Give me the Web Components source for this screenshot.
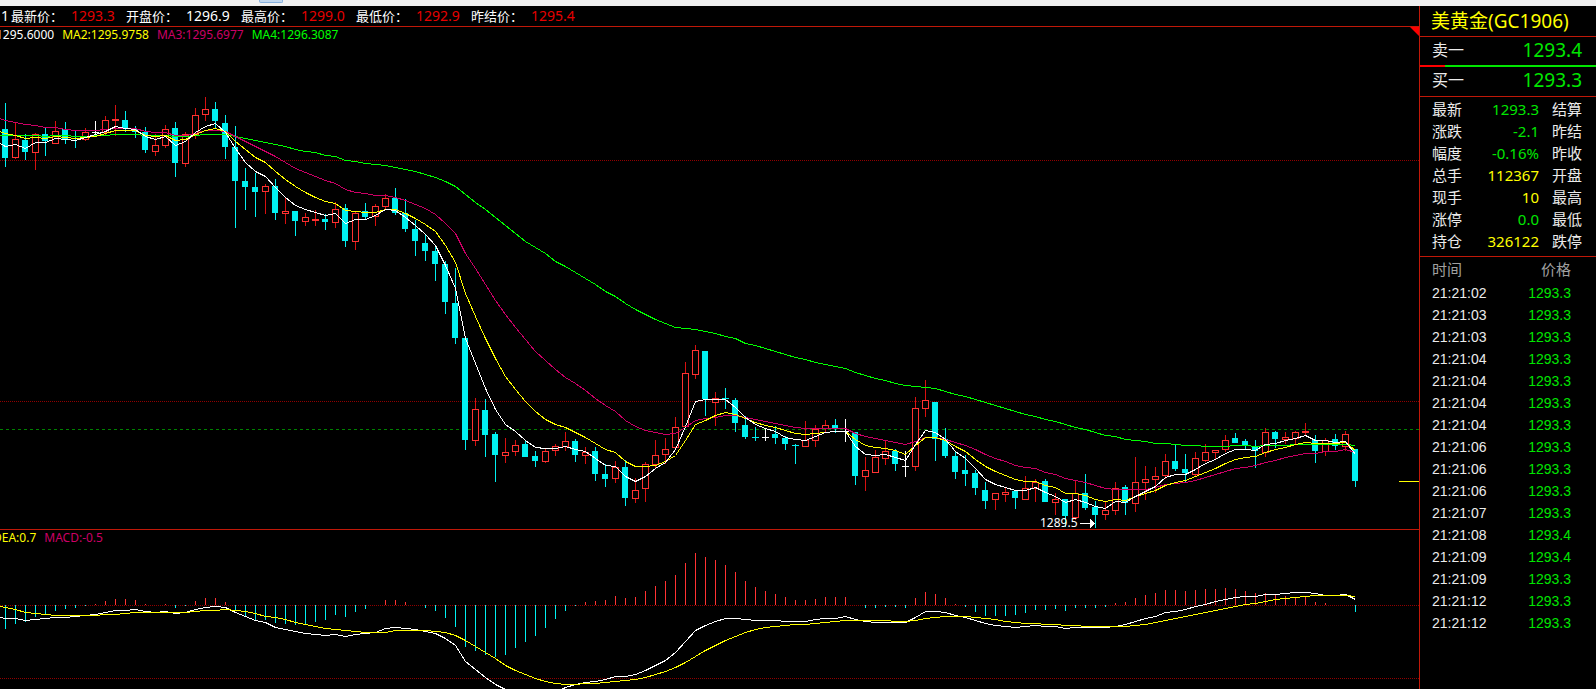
<!DOCTYPE html>
<html lang="zh-CN">
<head>
<meta charset="utf-8">
<meta name="viewport" content="width=device-width, initial-scale=1">
<title>美黄金(GC1906)</title>
<style>
html, body { margin: 0; background: #000; }
</style>
</head>
<body>
<trading-app></trading-app>

<script>
const UI = '"Noto Sans", "Noto Sans CJK SC", sans-serif';
const STEP = 10, FIRST = 5;

// One candle per entry: kind high low bodyTop bodyBottom (C falling, R rising, W unchanged)
const CANDLES = `C 103 167 129 158|R 122 159 139 158|C 134 160 140 152|R 133 170 134 153|C 127 156 134 141|R 121 144 131 144|C 122 144 129 139|C 131 148 138 139|R 128 141 132 140|W 121 136 132 133|R 116 135 120 133|R 105 136 119 121|C 111 132 120 129|C 126 138 129 132|C 127 153 132 150|R 134 156 145 152|R 125 148 129 146|C 122 177 128 163|R 132 167 134 164|R 108 139 115 135|R 97 121 109 115|C 102 129 109 121|C 115 159 123 147|C 126 228 147 181|C 168 210 181 187|C 173 217 187 192|R 184 214 186 192|C 179 220 186 213|R 198 224 211 214|C 211 236 211 221|R 213 226 217 222|R 210 226 219 221|C 214 230 219 222|R 202 228 209 223|C 204 247 208 241|R 211 250 213 242|C 203 219 211 217|R 204 226 206 217|R 194 210 198 207|C 188 215 198 213|C 199 232 213 229|C 220 256 229 241|C 235 261 243 251|C 246 281 251 264|C 261 314 264 302|C 268 344 303 338|C 338 450 338 440|R 398 446 409 441|C 399 457 410 435|C 432 482 434 455|R 438 463 452 456|R 440 456 445 452|C 440 457 444 457|C 451 467 456 461|R 449 463 451 462|R 444 456 446 451|R 432 451 441 447|C 439 462 441 455|R 447 464 452 456|C 447 481 451 474|C 464 487 474 479|R 461 483 467 479|C 460 506 467 498|R 478 503 490 499|R 462 502 464 489|R 440 468 455 465|R 438 464 449 455|R 417 449 427 448|R 362 427 373 427|R 345 379 350 375|C 351 416 351 399|R 392 426 398 403|C 388 409 398 399|C 398 432 400 423|C 416 439 425 437|C 427 441 437 438|W 428 441 437 438|C 426 444 434 438|C 436 450 438 444|C 444 464 445 446|R 421 447 440 447|R 425 447 429 441|R 420 432 425 429|C 419 433 425 429|W 419 442 431 432|C 432 485 432 476|R 457 491 470 477|R 450 473 457 473|R 440 465 451 459|C 449 471 451 464|W 451 477 466 467|R 397 471 408 467|R 380 417 400 409|C 402 461 402 439|C 428 458 439 456|C 452 479 456 472|C 455 486 470 474|C 470 495 473 488|C 482 509 490 501|R 493 510 493 500|R 487 502 492 495|C 491 509 491 498|R 476 500 488 500|R 479 502 482 489|C 479 502 481 502|R 493 515 499 503|C 499 527 499 516|R 480 520 493 518|C 474 510 493 508|C 501 528 507 515|R 501 520 510 515|R 482 515 488 511|C 485 515 487 503|R 457 512 482 504|R 466 500 479 483|R 467 493 476 480|R 454 479 461 476|C 445 471 461 469|C 454 482 469 473|R 452 477 458 475|R 444 462 452 461|R 450 460 450 453|R 435 452 440 450|C 433 443 438 443|C 439 449 441 446|C 440 468 446 451|R 428 457 432 453|C 431 448 432 439|R 432 444 437 440|R 431 445 432 439|R 423 435 431 433|C 435 463 440 451|R 438 456 440 452|C 434 450 439 446|R 431 451 434 447|C 449 487 449 481`
  .split('|').map(s => { const [k, ...n] = s.split(' '); return [k, ...n.map(Number)]; });

// Each series starts one half step left of the first candle
const MA = [
  ['#00ff00', [135,135,135,135,135,136,135,135,136,136,135,135,134,134,134,135,135,135,136,136,135,134,134,134,136,138,140,142,144,146,149,151,152,155,156,160,161,163,164,165,167,169,171,174,177,181,186,194,202,209,217,225,233,241,247,253,261,266,272,278,284,291,296,303,309,314,319,323,327,328,329,331,333,336,338,343,345,348,351,354,357,359,362,364,366,368,372,375,378,380,383,385,386,387,388,391,394,396,399,402,405,408,411,414,416,419,421,424,427,429,432,435,436,439,440,441,443,443,444,445,445,446,446,446,445,445,446,445,445,445,444,444,444,444,444,444,445]],
  ['#cc0066', [118,120,122,124,125,127,127,129,130,130,130,129,128,128,128,131,132,132,135,135,133,130,130,131,136,141,146,151,156,162,168,172,176,180,183,189,192,193,195,195,197,200,204,208,214,223,233,253,268,284,300,314,327,339,351,360,369,377,383,390,398,405,411,420,426,430,432,434,433,427,420,418,417,415,415,417,419,421,423,425,427,428,428,428,428,428,433,436,438,440,442,444,441,437,437,439,442,445,449,454,458,461,465,467,468,472,474,478,480,482,485,488,489,489,489,489,487,484,483,482,480,477,474,471,468,467,465,462,460,457,455,453,453,451,451,449,452]],
  ['#ffff00', [131,133,135,138,137,138,136,137,138,137,136,133,130,130,130,135,136,135,140,139,134,130,128,131,141,149,157,162,171,179,186,192,197,201,203,210,211,212,212,209,209,213,218,224,231,245,262,293,316,338,358,376,389,401,411,419,424,427,432,437,443,449,452,461,466,466,465,461,455,440,424,420,415,412,414,418,422,425,427,430,433,434,433,432,431,431,439,445,447,448,450,454,445,437,437,440,446,451,459,466,471,475,479,481,481,485,487,493,493,495,499,501,499,500,496,493,490,485,482,480,476,472,468,463,459,457,456,452,449,447,444,442,443,443,443,442,450]],
  ['#ffffff', [143,146,144,148,142,142,138,139,140,137,134,131,126,128,129,136,139,136,145,141,132,126,123,132,148,162,171,176,187,197,205,209,212,215,213,223,219,219,215,209,210,217,225,234,245,265,288,338,363,388,409,424,431,440,447,448,448,446,449,451,458,465,466,476,481,476,468,462,449,426,401,399,399,399,407,417,424,428,431,437,439,440,436,432,431,431,446,454,455,454,457,460,444,430,432,439,451,458,468,479,484,487,490,490,487,492,496,502,499,502,506,508,501,502,496,491,486,477,474,474,469,463,459,453,449,449,450,444,443,440,438,435,440,440,442,441,454]]
];
const DEA = [606,607,609,612,613,614,615,615,615,615,615,614,614,613,612,612,612,612,612,612,611,610,610,609,610,611,613,616,617,619,622,624,626,628,629,630,631,632,632,632,630,630,630,630,631,632,635,640,646,652,658,665,670,674,678,681,683,684,684,683,683,682,681,680,679,677,674,671,667,662,656,650,645,640,636,632,629,627,626,625,624,624,623,622,621,620,620,620,620,620,621,621,620,618,617,616,616,616,617,618,619,621,622,623,623,624,624,625,625,626,626,626,626,626,625,624,622,620,618,616,614,612,610,608,606,604,603,601,599,598,597,596,595,595,595,595,596];
const DIF = [617,618,618,620,619,618,617,617,616,615,614,612,610,610,609,611,612,611,613,612,609,607,606,607,612,616,620,622,627,629,631,633,634,635,634,636,634,633,632,628,627,628,629,631,633,638,645,661,669,677,684,689,693,695,696,695,692,687,684,682,681,679,676,676,674,670,665,660,652,641,630,625,621,618,618,619,620,620,620,621,621,621,619,618,618,616,619,621,622,622,622,622,617,611,611,612,615,617,620,623,625,626,627,626,625,626,626,628,627,627,627,627,626,624,621,618,616,612,611,609,606,604,601,599,597,596,596,594,594,593,592,592,593,595,595,594,599];
const ZERO = 605;
const BARS = [629,624,622,617,615,611,609,608,606,604,601,599,599,600,604,605,604,608,606,601,598,598,602,611,616,620,620,623,624,625,624,622,620,615,617,612,609,605,600,600,602,605,608,611,618,627,647,651,655,657,655,648,642,636,628,619,611,606,602,601,600,596,598,597,591,586,581,575,563,553,557,560,565,572,581,587,591,594,597,600,600,599,597,597,597,605,608,608,607,607,608,598,592,594,598,604,607,612,616,616,616,615,613,610,610,609,611,608,608,608,607,603,602,598,595,593,590,590,591,590,589,589,588,589,591,593,593,594,596,597,597,602,603,605,605,612];

const rect = (x, y, w, h, fill) => `<rect x="${x}" y="${y}" width="${w}" height="${h}" fill="${fill}"/>`;
const series = (values, colour, top) => {
  const pts = values.map((v, i) => `${i ? FIRST + STEP * (i - 1) + .5 : 0},${v - top + .5}`).join(' ');
  return `<polyline points="${pts}" fill="none" stroke="${colour}"/>`;
};
const hline = (y, colour, dash) =>
  `<line x1="0" x2="100%" y1="${y + .5}" y2="${y + .5}" stroke="${colour}" stroke-dasharray="${dash}"/>`;

class Base extends HTMLElement {
  constructor() {
    super();
    this.attachShadow({ mode: 'open' }).innerHTML = this.render();
  }
}

customElements.define('window-strip', class extends Base {
  render() {
    return `<style>
      :host { display: block; height: 6px; background: #f0f0f0; padding-left: 259px; }
      i { display: block; box-sizing: border-box; width: 24px; height: 3px; background: #c2d8f0; border: 1px solid #86b0de; border-top: 0; border-radius: 0 0 2px 2px; }
    </style><i></i>`;
  }
});

customElements.define('price-summary', class extends Base {
  render() {
    const items = [['最新价', '1293.3', 'up'], ['开盘价', '1296.9', ''], ['最高价', '1299.0', 'up'], ['最低价', '1292.9', 'up'], ['昨结价', '1295.4', 'up']];
    return `<style>
      :host { display: flex; height: 20px; align-items: center; border-bottom: 1px solid #c01808; padding-left: 1px; color: #fff; white-space: nowrap; overflow: hidden; }
      dl { display: flex; margin: 0; line-height: 20px; padding-left: 2px; gap: 11px; }
      div { display: flex; gap: 8px; }
      dt { font-size: 13px; width: 52px; }
      dd { margin: 0; font-size: 14px; width: 44px; }
      span { font-size: 14px; line-height: 20px; }
      .up { color: #e60000; }
    </style><span>1</span><dl>${items.map(([a, b, c]) => `<div><dt>${a}：</dt><dd class="${c}">${b}</dd></div>`).join('')}</dl>`;
  }
});

customElements.define('indicator-legend', class extends Base {
  render() {
    return `<style>
      :host { display: flex; gap: 8px; font-size: 12px; line-height: 16px; white-space: nowrap; }
    </style><slot></slot>`;
  }
});

customElements.define('price-chart', class extends Base {
  render() {
    const top = 27;
    const candles = CANDLES.map(([k, hi, lo, a, b], i) => {
      const x = FIRST + STEP * i, y = v => v - top;
      if (k === 'R') {
        const body = b - a < 3 ? rect(x - 3, y(a), 7, b - a, '#ff3232')
          : `<rect x="${x - 2.5}" y="${y(a) + .5}" width="6" height="${b - a - 1}" fill="#000" stroke="#ff3232"/>`;
        return rect(x, y(hi), 1, lo - hi, '#d81010') + body;
      }
      const c = k === 'W' ? '#fff' : '#00f0f0';
      return rect(x, y(hi), 1, lo - hi, c) + rect(x - 3, y(a), b - a > 1 ? 6 : 7, b - a, c);
    }).join('');
    return `<style>
      :host { display: block; position: relative; overflow-x: clip; border-bottom: 1px solid #c01808; }
      svg { display: block; width: 100%; height: 502px; overflow: visible; shape-rendering: crispEdges; }
      text { font-size: 12px; fill: #fff; }
      ::slotted(*) { position: absolute; left: 0; top: 0; }
      .corner { position: absolute; right: 0; top: 0; width: 9px; height: 9px; background: #f00; clip-path: polygon(0 0, 100% 0, 100% 100%); }
      .last { position: absolute; right: 0; top: 454px; width: 20px; height: 1px; background: #ff0; }
    </style>
    <svg role="img" aria-label="K线图">
      ${hline(133, '#900000', '1 1')}${hline(374, '#900000', '1 1')}
      ${hline(402, '#008000', '3 3')}
      ${candles}
      ${MA.map(([c, v]) => series(v, c, top)).join('')}
      <text x="1040" y="500">1289.5</text>
      <path d="M1080 496h10v-4h1v1h1v1h1v1h1v1h1v1h-1v1h-1v1h-1v1h-1v1h-1v-4h-10z" fill="#fff"/>
    </svg>
    <div class="corner"></div><div class="last"></div>
    <slot></slot>`;
  }
});

customElements.define('macd-chart', class extends Base {
  render() {
    const top = 530;
    const bars = BARS.map((v, i) => v === ZERO ? '' : v > ZERO
      ? rect(FIRST + STEP * i, ZERO - top, 1, v - ZERO, '#00f0f0')
      : rect(FIRST + STEP * i, v - top, 1, ZERO - v, '#ff3232')).join('');
    return `<style>
      :host { display: block; position: relative; overflow: hidden; min-height: 120px; }
      svg { display: block; width: 100%; height: 100%; position: absolute; shape-rendering: crispEdges; }
      ::slotted(*) { position: absolute; left: 0; top: 0; }
    </style>
    <svg role="img" aria-label="MACD">
      ${hline(75, '#900000', '1 1')}${hline(148, '#900000', '1 1')}
      ${bars}${series(DIF, '#fff', top)}${series(DEA, '#ff0', top)}
    </svg><slot></slot>`;
  }
});

customElements.define('order-book', class extends Base {
  render() {
    return `<style>
      :host { display: block; }
      h1 { margin: 0; padding-left: 11px; height: 30px; line-height: 30px; font-size: 19px; font-weight: 400; color: #ff0; border-bottom: 1px solid #c01808; white-space: nowrap; }
      div { display: flex; justify-content: space-between; padding: 0 14px 0 12px; height: 28px; line-height: 26px; color: #ebebeb; font-size: 16px; }
      b { font-weight: 400; font-size: 19px; color: #00e600; }
      hr { margin: 0; border: 0; height: 2px; background: linear-gradient(to right, #f00 25px, #00e600 25px); }
      .bid { height: 29px; border-bottom: 1px solid #c01808; }
    </style>
    <h1>美黄金(GC1906)</h1>
    <div><span>卖一</span><b>1293.4</b></div><hr>
    <div class="bid"><span>买一</span><b>1293.3</b></div>`;
  }
});

customElements.define('quote-table', class extends Base {
  render() {
    const rows = [['最新', '1293.3', 'g', '结算'], ['涨跌', '-2.1', 'g', '昨结'], ['幅度', '-0.16%', 'g', '昨收'], ['总手', '112367', 'y', '开盘'], ['现手', '10', 'y', '最高'], ['涨停', '0.0', 'g', '最低'], ['持仓', '326122', 'y', '跌停']];
    return `<style>
      :host { display: block; padding: 1px 0 4px 12px; border-bottom: 1px solid #c01808; }
      table { border-collapse: collapse; width: 100%; table-layout: fixed; font-size: 15px; }
      tr { height: 22px; }
      th, td { padding: 0; line-height: 22px; font-weight: 400; text-align: left; color: #ebebeb; white-space: nowrap; }
      th:first-child { width: 32px; }
      td { width: 75px; text-align: right; }
      th:last-child { padding-left: 13px; }
      td.g { color: #00e600; } td.y { color: #ff0; }
    </style><table>${rows.map(([a, b, c, d]) => `<tr><th scope="row">${a}</th><td class="${c}">${b}</td><th scope="row">${d}</th></tr>`).join('')}</table>`;
  }
});

customElements.define('tick-list', class extends Base {
  render() {
    const ticks = [['02', 3], ['03', 3], ['03', 3], ['04', 3], ['04', 3], ['04', 3], ['04', 3], ['06', 3], ['06', 3], ['06', 3], ['07', 3], ['08', 4], ['09', 4], ['09', 3], ['12', 3], ['12', 3]];
    return `<style>
      :host { display: block; padding: 0 25px 0 12px; }
      table { border-collapse: collapse; width: 100%; font: 14px "Liberation Sans", "Noto Sans CJK SC", sans-serif; color: #ebebeb; }
      th, td { padding: 0; height: 22px; line-height: 22px; font-weight: 400; text-align: left; }
      th { height: 25px; line-height: 25px; font-size: 15px; color: #a0a0a0; }
      :is(th, td):last-child { text-align: right; }
      td:last-child { color: #00e600; }
    </style><table><thead><tr><th scope="col">时间</th><th scope="col">价格</th></tr></thead>
    <tbody>${ticks.map(([t, p]) => `<tr><td>21:21:${t}</td><td>1293.${p}</td></tr>`).join('')}</tbody></table>`;
  }
});

customElements.define('trading-app', class extends Base {
  render() {
    return `<style>
      :host { display: grid; grid-template: auto 1fr / minmax(0, 1fr) 177px; min-height: 100vh; background: #000; font-family: ${UI}; }
      window-strip { grid-column: 1 / -1; }
      main { display: flex; flex-direction: column; min-width: 0; }
      macd-chart { flex: 1; }
      aside { border-left: 1px solid #c01808; }
      .w { color: #fff; } .y { color: #ff0; } .m { color: #cc0066; } .g { color: #0f0; }
      .ma { margin-left: -4px; }
      .macd { margin-left: -7px; }
    </style>
    <window-strip></window-strip>
    <main>
      <price-summary></price-summary>
      <price-chart><indicator-legend class="ma"><span class="w">1295.6000</span><span class="y">MA2:1295.9758</span><span class="m">MA3:1295.6977</span><span class="g">MA4:1296.3087</span></indicator-legend></price-chart>
      <macd-chart><indicator-legend class="macd"><span class="y">DEA:0.7</span><span class="m">MACD:-0.5</span></indicator-legend></macd-chart>
    </main>
    <aside>
      <order-book></order-book>
      <quote-table></quote-table>
      <tick-list></tick-list>
    </aside>`;
  }
});
</script>
</body>
</html>
